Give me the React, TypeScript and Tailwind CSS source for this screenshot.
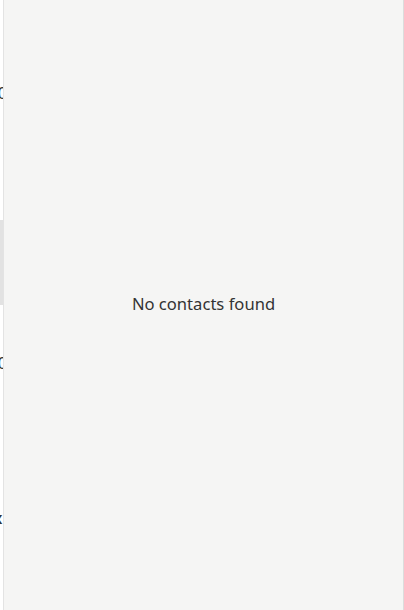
import React from "react";

// underlying page, mostly hidden behind the contacts panel
const BackRow = ({ children, className = "" }: { children: React.ReactNode; className?: string }) => (
  <div className={"flex items-center h-[65px] " + className}>{children}</div>
);

const ContactsPanel = () => {
  return (
    <div className="absolute top-0 bottom-0 left-[3px] right-0 flex border-l border-[#e3e3e3] bg-[#f5f5f4]">
      <div className="flex flex-1 items-center justify-center">
        <p className="text-[16.6px] text-[#333333] pb-[2px]">No contacts found</p>
      </div>
      <div className="w-px bg-[#dcdcdc]" />
    </div>
  );
};

export default function App() {
  return (
    <div className="relative h-[610px] w-[404px] overflow-hidden bg-white" style={{ fontFamily: '"Noto Sans", "Open Sans", sans-serif' }}>
      <div className="flex flex-col pt-[60px] -ml-[7px] text-[#333]">
        <BackRow><span className="text-[16px]">(0</span></BackRow>
        <BackRow><span className="font-bold text-[16px]">I</span></BackRow>
        <div className="h-[30px]" />
        <BackRow className="h-[85px] bg-[#e2e2e2]"><span className="text-[16px] pt-[18px]">l</span></BackRow>
        <div className="h-[25px]" />
        <BackRow><span className="text-[16px]">(0</span></BackRow>
        <div className="h-[22px]" />
        <BackRow><span className="text-[16px]">l</span></BackRow>
        <div className="h-[3px]" />
        <BackRow><span className="text-[16px] font-bold">x</span></BackRow>
        <div className="h-[40px]" />
        <BackRow className="h-[30px]"><span className="text-[16px]">T</span></BackRow>
      </div>
      <ContactsPanel />
    </div>
  );
}
